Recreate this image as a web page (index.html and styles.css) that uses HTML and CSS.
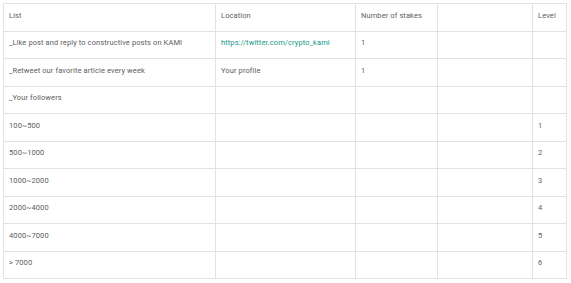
FILE: index.html
```html
<!DOCTYPE html>
<html lang="en">
<head>
  <meta charset="UTF-8">
  <title>Stakes</title>
  <link rel="stylesheet" href="styles.css">
</head>
<body>
  <table class="stakes">
    <colgroup>
      <col class="col-list">
      <col class="col-location">
      <col class="col-number">
      <col class="col-empty">
      <col class="col-level">
    </colgroup>
    <thead>
      <tr>
        <th>List</th>
        <th>Location</th>
        <th>Number of stakes</th>
        <th></th>
        <th>Level</th>
      </tr>
    </thead>
    <tbody>
      <tr>
        <td>_Like post and reply to constructive posts on KAMI</td>
        <td><a href="#">https://twitter.com/crypto_kami</a></td>
        <td>1</td>
        <td></td>
        <td></td>
      </tr>
      <tr>
        <td>_Retweet our favorite article every week</td>
        <td>Your profile</td>
        <td>1</td>
        <td></td>
        <td></td>
      </tr>
      <tr>
        <td>_Your followers</td>
        <td></td>
        <td></td>
        <td></td>
        <td></td>
      </tr>
      <tr><td>100~500</td><td></td><td></td><td></td><td>1</td></tr>
      <tr><td>500~1000</td><td></td><td></td><td></td><td>2</td></tr>
      <tr><td>1000~2000</td><td></td><td></td><td></td><td>3</td></tr>
      <tr><td>2000~4000</td><td></td><td></td><td></td><td>4</td></tr>
      <tr><td>4000~7000</td><td></td><td></td><td></td><td>5</td></tr>
      <tr><td>&gt; 7000</td><td></td><td></td><td></td><td>6</td></tr>
    </tbody>
  </table>
</body>
</html>
```

FILE: styles.css
```css
* {
  box-sizing: border-box;
}

body {
  margin: 3px;
  background-color: #fff;
  font-family: Roboto, "Liberation Sans", sans-serif;
  font-size: 7.5px;
  letter-spacing: 0.1px;
  color: #606060;
}

.stakes {
  width: 563px;
  border-collapse: collapse;
  table-layout: fixed;
}

.col-list { width: 212px; }
.col-location { width: 140px; }
.col-number { width: 82px; }
.col-empty { width: 95px; }
.col-level { width: 34px; }

.stakes th,
.stakes td {
  height: 27.5px;
  padding: 0 5px 4px 5px;
  border: 1px solid #e2e2e2;
  text-align: left;
  font-weight: normal;
  vertical-align: middle;
  white-space: nowrap;
  overflow: hidden;
}

.stakes a {
  color: #12988a;
  text-decoration: none;
}
```
